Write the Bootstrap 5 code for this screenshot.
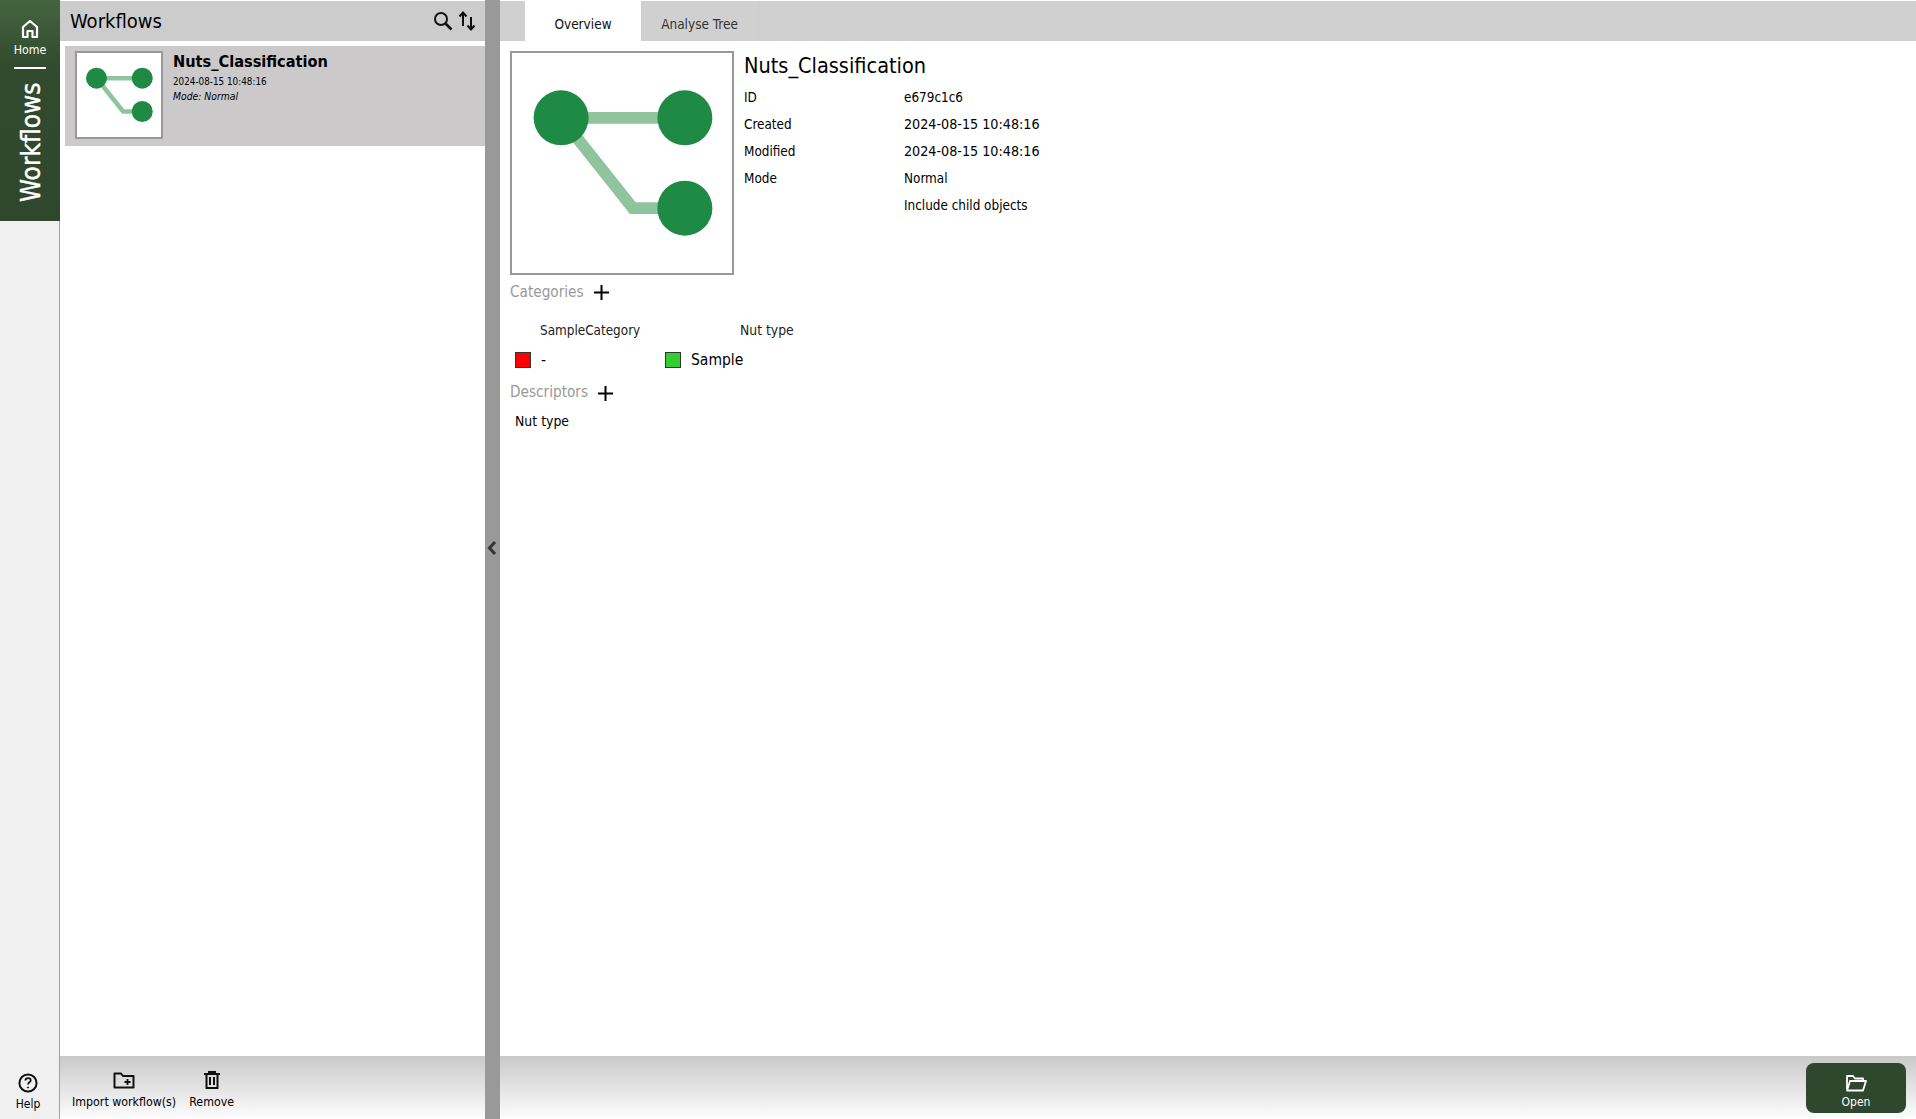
<!DOCTYPE html>
<html lang="en">
<head>
<meta charset="utf-8">
<title>Workflows</title>
<link href="https://cdn.jsdelivr.net/npm/bootstrap@5.3.0/dist/css/bootstrap.min.css" rel="stylesheet">
<style>
html,body{height:100%}
body{font-family:"DejaVu Sans","Liberation Sans",sans-serif;font-stretch:condensed;color:#000;background:#fff;overflow:hidden;font-size:13px}
.app-shell{height:1119px;background:#fff}
.rail{width:60px;background:#f0f0f0;border-right:1px solid #a0a0a0}
.rail-active{height:221px;background:linear-gradient(#44653f,#324a2e 30%,#2f472c);color:#fff;margin-right:-1px;padding-top:19px}
.rail-home{font-size:12.300px;line-height:14px;margin-top:4px;padding-bottom:10px;width:32px;border-bottom:2px solid #fff;text-align:center;white-space:nowrap;display:flex;justify-content:center}
.rail-title{writing-mode:vertical-rl;transform:rotate(180deg);font-size:26px;line-height:32px;margin-top:14px;margin-left:2px;height:119px;display:flex;align-items:center;justify-content:center;-webkit-text-stroke:.4px #fff}
.rail-help{height:63px;font-size:12px;line-height:14px;padding-top:17px;padding-right:3px}
.list-panel{width:425px}
.panel-head{height:40px;background:#ccc;flex:none;margin-top:1px}
.list-title{font-size:20px;line-height:40px;padding-left:10px}
.list-icons{padding-right:9px;gap:5px}
.list-body{padding:5px 0 0 5px}
.wf-item{height:100px;background:#cbc9ca;padding:5px 10px;gap:10px}
.thumb{width:88px;height:88px;border:2px solid #999;background:#fff;flex:none}
.wf-name{font-size:16.200px;font-weight:700;line-height:20px;margin-top:1px}
.wf-date{font-size:9.800px;line-height:12px;margin-top:4px}
.wf-mode{font-size:10.300px;line-height:12px;margin-top:2px;font-style:italic}
.foot{height:63px;flex:none;background:linear-gradient(#c9c9c9,#fdfdfd)}
.foot-list{padding:15px 0 0 12px;gap:13px}
.foot-btn{font-size:12.300px;line-height:14px;text-align:center;white-space:nowrap}
.foot-btn svg{display:block;margin:0 auto 6px}
.splitter{width:15px;background:#999;flex:none}
.main-panel{min-width:0}
.tab-strip{height:40px;background:#d0d0d0;padding-left:25px;flex:none;margin-top:1px}
.tab-cell{font-size:13.500px;line-height:46px;text-align:center;color:#333}
.tab-on{width:116px;background:#fff;color:#111}
.tab-off{width:118px;border-right:1px solid #ccc}
.detail{padding:10px 0 0 10px}
.preview{width:224px;height:224px;border:2px solid #999;flex:none}
.meta{padding-left:10px}
.meta-title{font-size:21.500px;line-height:26px;margin-top:2px;margin-bottom:5px}
.meta-row{height:27px;line-height:27px;font-size:13.400px}
.meta-key{width:160px}
.meta-date{font-size:14.200px}
.sec-head{font-size:15.200px;line-height:20px;color:#999;padding-top:6px;gap:10px;height:26px}
.sec-head span{margin-top:1px}
.sec-head svg{margin-top:2px}
.cat-heads{font-size:13.400px;line-height:18px;padding:21px 0 0 30px;color:#222}
.cat-a{width:200px}
.cat-b{font-size:13.800px;margin-top:-1px}
.cat-vals{padding:6px 0 0 5px;height:34px}
.swatch{width:16px;height:16px;border:1px solid #333;flex:none}
.val-text{font-size:15.500px;line-height:18px;margin-left:10px}
.cat-cell{width:150px}
.desc-head{padding-top:8px;height:28px}
.desc-head span{margin-top:0}
.desc-head svg{margin-top:3px}
.desc-val{font-size:13.900px;padding:10px 0 0 5px;line-height:18px}
.foot-main{padding:7px 10px 0 0}
.open-btn{width:100px;height:50px;background:#2f472c;border:0;border-radius:8px;color:#fff;font-size:12px;line-height:14px;padding:7px 0 0;font-stretch:condensed}
.open-btn:hover{background:#2f472c;color:#fff}
.open-btn svg{display:block;margin:0 auto 3px}
.collapse-mark{top:540px;left:1px}
</style>
</head>
<body>
<div class="app-shell d-flex">
  <aside class="rail d-flex flex-column justify-content-between">
    <div class="rail-active d-flex flex-column align-items-center">
      <svg width="18" height="20" viewBox="0 0 18 20" fill="none" stroke="#fff" stroke-width="2.200" stroke-linejoin="round"><path d="M2 18V8l7-6 7 6v10h-4.500v-6h-5v6z"/></svg>
      <div class="rail-home">Home</div>
      <div class="rail-title">Workflows</div>
    </div>
    <div class="rail-help d-flex flex-column align-items-center">
      <svg width="20" height="20" viewBox="0 0 20 20" fill="none" stroke="#111" stroke-width="2"><circle cx="10" cy="10" r="8.600"/><path d="M7.400 7.600c0-1.600 1.200-2.500 2.700-2.500s2.600.9 2.600 2.300c0 1.900-2.700 1.900-2.700 4.100" stroke-width="1.800"/><circle cx="10" cy="14.500" r=".6" fill="#111" stroke-width="1"/></svg>
      <div class="mt-1">Help</div>
    </div>
  </aside>

  <section class="list-panel d-flex flex-column">
    <header class="panel-head d-flex justify-content-between align-items-center">
      <div class="list-title">Workflows</div>
      <div class="list-icons d-flex align-items-center">
        <svg width="20" height="20" viewBox="0 0 20 20" fill="none" stroke="#111" stroke-width="2"><circle cx="8" cy="8" r="6"/><path d="M12.500 12.500l6 6" stroke-width="2.600"/></svg>
        <svg width="18" height="22" viewBox="0 0 18 22" fill="none" stroke="#111" stroke-width="2"><path d="M5 16V3M1.500 6.500L5 2.500l3.500 4"/><path d="M13 7v12M9.500 15.500l3.500 4 3.500-4"/></svg>
      </div>
    </header>
    <div class="list-body flex-grow-1">
      <div class="wf-item d-flex">
        <div class="thumb">
          <svg width="84" height="84" viewBox="0 0 224 224"><path d="M52 67H174M52 67L123 156H174" fill="none" stroke="#8fc49f" stroke-width="12"/><circle cx="52" cy="67" r="28" fill="#1f8a43"/><circle cx="174" cy="67" r="28" fill="#1f8a43"/><circle cx="174" cy="156" r="28" fill="#1f8a43"/></svg>
        </div>
        <div>
          <div class="wf-name">Nuts_Classification</div>
          <div class="wf-date">2024-08-15 10:48:16</div>
          <div class="wf-mode">Mode: Normal</div>
        </div>
      </div>
    </div>
    <footer class="foot foot-list d-flex">
      <div class="foot-btn">
        <svg width="22" height="18" viewBox="0 0 22 18" fill="none" stroke="#111" stroke-width="2"><path d="M1.500 15.500V2.500h6.500l2 2.500h10.500v11.500H1.500z" stroke-linejoin="round"/><path d="M14.500 8v6M11.500 11h6" stroke-width="1.800"/></svg>
        Import workflow(s)
      </div>
      <div class="foot-btn">
        <svg width="18" height="18" viewBox="0 0 18 18" fill="none" stroke="#111" stroke-width="2"><path d="M1 3h16M6 3V1h6v2M3.500 3v14h11V3M7 6v8M11 6v8"/></svg>
        Remove
      </div>
    </footer>
  </section>

  <div class="splitter position-relative">
    <svg class="collapse-mark position-absolute" width="12" height="16" viewBox="0 0 12 16" fill="none" stroke="#333" stroke-width="3"><path d="M9 2L3.500 8 9 14"/></svg>
  </div>

  <main class="main-panel flex-grow-1 d-flex flex-column">
    <nav class="tab-strip d-flex">
      <div class="tab-cell tab-on">Overview</div>
      <div class="tab-cell tab-off">Analyse Tree</div>
    </nav>
    <div class="detail flex-grow-1">
      <div class="d-flex">
        <div class="preview">
          <svg width="220" height="220" viewBox="0 0 224 224"><path d="M50 66H176M50 66L123 158H176" fill="none" stroke="#8fc49f" stroke-width="12"/><circle cx="50" cy="66" r="28" fill="#1f8a43"/><circle cx="176" cy="66" r="28" fill="#1f8a43"/><circle cx="176" cy="158" r="28" fill="#1f8a43"/></svg>
        </div>
        <div class="meta">
          <div class="meta-title">Nuts_Classification</div>
          <div class="meta-row d-flex"><div class="meta-key">ID</div><div>e679c1c6</div></div>
          <div class="meta-row d-flex"><div class="meta-key">Created</div><div class="meta-date">2024-08-15 10:48:16</div></div>
          <div class="meta-row d-flex"><div class="meta-key">Modified</div><div class="meta-date">2024-08-15 10:48:16</div></div>
          <div class="meta-row d-flex"><div class="meta-key">Mode</div><div>Normal</div></div>
          <div class="meta-row d-flex"><div class="meta-key"></div><div>Include child objects</div></div>
        </div>
      </div>
      <div class="sec-head d-flex align-items-center">
        <span>Categories</span>
        <svg width="15" height="15" viewBox="0 0 15 15" stroke="#000" stroke-width="2"><path d="M7.500 0v15M0 7.500h15"/></svg>
      </div>
      <div class="cat-heads d-flex"><div class="cat-a">SampleCategory</div><div class="cat-b">Nut type</div></div>
      <div class="cat-vals d-flex">
        <div class="cat-cell d-flex align-items-center"><div class="swatch" style="background:#f00"></div><span class="val-text">-</span></div>
        <div class="d-flex align-items-center"><div class="swatch" style="background:#33cc33"></div><span class="val-text">Sample</span></div>
      </div>
      <div class="sec-head desc-head d-flex align-items-center">
        <span>Descriptors</span>
        <svg width="15" height="15" viewBox="0 0 15 15" stroke="#000" stroke-width="2"><path d="M7.500 0v15M0 7.500h15"/></svg>
      </div>
      <div class="desc-val">Nut type</div>
    </div>
    <footer class="foot foot-main d-flex justify-content-end">
      <button type="button" class="btn open-btn">
        <svg width="22" height="18" viewBox="0 0 22 18" fill="none" stroke="#fff" stroke-width="1.800" stroke-linejoin="round"><path d="M2 15V2h6l2 2.500h8V7"/><path d="M2 16.500L5 7h16l-3 9.500z"/></svg>
        Open
      </button>
    </footer>
  </main>
</div>
</body>
</html>
